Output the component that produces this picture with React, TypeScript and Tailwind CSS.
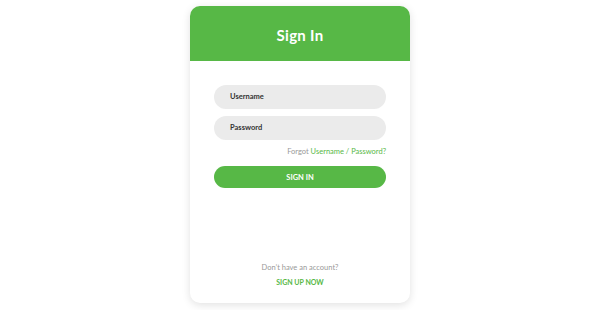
export default function App() {
  return (
    <div className="flex h-[310px] w-full justify-center bg-white pt-[6px] font-['Lato',sans-serif]">
      <div className="flex h-[297px] w-[220px] flex-col overflow-hidden rounded-[10px] bg-white shadow-[0_2px_8px_rgba(0,0,0,0.12)]">
        <div className="flex h-[55px] items-center justify-center bg-[#57b846] pt-[3px]">
          <h1 className="text-[15px] font-bold tracking-[0.3px] text-white">Sign In</h1>
        </div>
        <div className="flex flex-1 flex-col px-[24px] pt-[24px]">
          <div className="flex h-[24px] items-center rounded-full bg-[#ebebeb] px-[16px] text-[7.5px] font-bold text-[#333]">
            Username
          </div>
          <div className="mt-[7px] flex h-[24px] items-center rounded-full bg-[#ebebeb] px-[16px] text-[7.5px] font-bold text-[#333]">
            Password
          </div>
          <p className="mt-[6px] text-right text-[7.5px] text-[#999]">
            Forgot <span className="text-[#57b846]">Username / Password?</span>
          </p>
          <button className="mt-[9px] flex h-[22px] items-center justify-center rounded-full bg-[#57b846] text-[7.5px] font-bold uppercase text-white">
            Sign in
          </button>
          <div className="mt-auto flex flex-col items-center pb-[16px]">
            <p className="text-[7.5px] text-[#999]">Don’t have an account?</p>
            <p className="mt-[3px] text-[7px] font-bold uppercase text-[#57b846]">Sign up now</p>
          </div>
        </div>
      </div>
    </div>
  );
}
